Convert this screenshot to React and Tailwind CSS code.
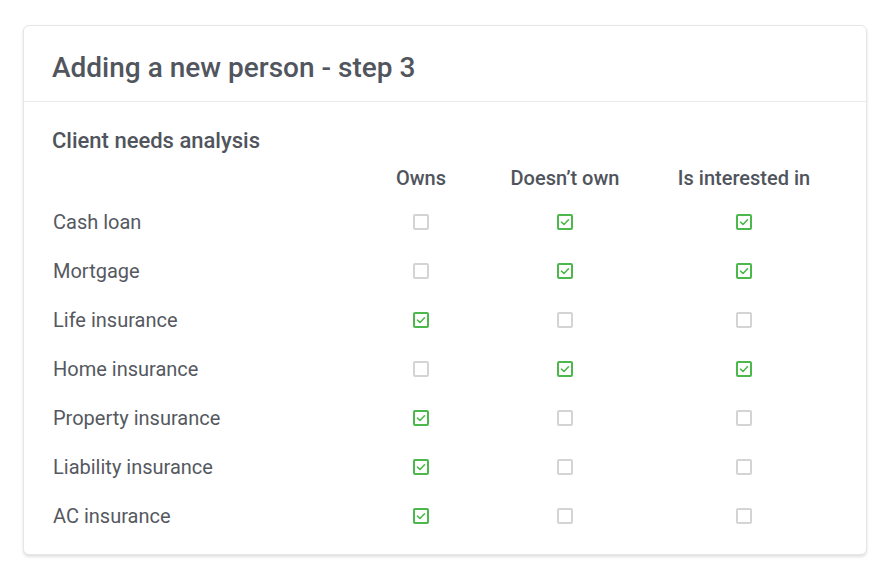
import React from 'react';

const rows = [
  { label: 'Cash loan', values: [false, true, true] },
  { label: 'Mortgage', values: [false, true, true] },
  { label: 'Life insurance', values: [true, false, false] },
  { label: 'Home insurance', values: [false, true, true] },
  { label: 'Property insurance', values: [true, false, false] },
  { label: 'Liability insurance', values: [true, false, false] },
  { label: 'AC insurance', values: [true, false, false] },
];

const columns = ['Owns', 'Doesn\u2019t own', 'Is interested in'];

function Checkbox({ checked }) {
  if (!checked) {
    return <span className="block w-4 h-4 rounded-[2px] border-2 border-[#d4d4d4] bg-white" />;
  }
  return (
    <span className="flex items-center justify-center w-4 h-4 rounded-[2px] border-2 border-[#4cb84c] bg-white">
      <svg width="10" height="10" viewBox="0 0 10 10" fill="none">
        <path d="M1.5 5.2 L4 7.5 L8.5 2.8" stroke="#4cb84c" strokeWidth="1.6" strokeLinecap="round" strokeLinejoin="round" />
      </svg>
    </span>
  );
}

export default function App() {
  return (
    <div className="w-[890px] h-[587px] bg-white pt-[25px] pl-[23px]" style={{ fontFamily: 'Roboto, "Liberation Sans", sans-serif' }}>
      <div className="w-[844px] h-[530px] bg-white border border-[#e6e6e6] rounded-md shadow-[0_2px_3px_rgba(0,0,0,0.12)]">
        <div className="h-[76px] border-b border-[#ececec] pl-[28px] pt-[8px] flex items-center">
          <h1 className="text-[28px] font-medium text-[#51555d] leading-none">Adding a new person - step 3</h1>
        </div>
        <div className="pl-[28px] pt-[25px]">
          <h2 className="text-[22px] font-medium text-[#50545c] leading-7">Client needs analysis</h2>
          <div className="grid grid-cols-[298px_142px_146px_212px] mt-[11px] h-6 items-center">
            <div />
            {columns.map((c) => (
              <div key={c} className="text-center text-[20px] font-medium text-[#50545c] leading-6">{c}</div>
            ))}
          </div>
          <div className="mt-[7px]">
            {rows.map((r) => (
              <div key={r.label} className="grid grid-cols-[298px_142px_146px_212px] h-[49px] items-center">
                <div className="text-[20px] text-[#55595f] pl-px">{r.label}</div>
                {r.values.map((v, i) => (
                  <div key={i} className="flex justify-center">
                    <Checkbox checked={v} />
                  </div>
                ))}
              </div>
            ))}
          </div>
        </div>
      </div>
    </div>
  );
}
